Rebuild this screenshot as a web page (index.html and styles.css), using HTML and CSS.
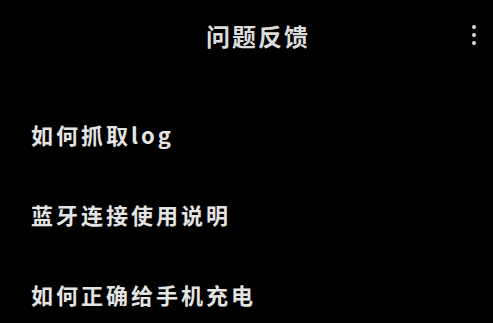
FILE: index.html
```html
<!DOCTYPE html>
<html lang="zh-CN">
<head>
  <meta charset="UTF-8">
  <title>问题反馈</title>
  <link rel="stylesheet" href="styles.css">
</head>
<body>

<div class="page">
  <div class="top-bar">
    <span class="title">问题反馈</span>
    <span class="more">
      <i></i><i></i><i></i>
    </span>
  </div>
  <div class="faq-list">
    <div class="faq-item">如何抓取log</div>
    <div class="faq-item">蓝牙连接使用说明</div>
    <div class="faq-item">如何正确给手机充电</div>
  </div>
</div>

</body>
</html>
```

FILE: styles.css
```css
* {
  box-sizing: border-box;
  font-family: "Noto Sans CJK SC", "Noto Sans", sans-serif;
}

html, body {
  margin: 0;
  padding: 0;
  width: 100vw;
  height: 100vh;
  background-color: #000;
  color: #e4e4e4;
  overflow: hidden;
}

.page {
  display: flex;
  flex-direction: column;
}

.top-bar {
  height: 70px;
  display: flex;
  align-items: center;
  padding: 0 15px 0 46px;
}

.top-bar .title {
  flex: 1;
  text-align: center;
  font-size: 24px;
  font-weight: bold;
  letter-spacing: 2px;
  color: #dcdcdc;
}

.top-bar .more {
  width: 8px;
  display: flex;
  flex-direction: column;
  align-items: center;
  gap: 4px;
}

.top-bar .more i {
  display: block;
  width: 4px;
  height: 4px;
  border-radius: 50%;
  background-color: #dcdcdc;
}

.faq-list {
  display: flex;
  flex-direction: column;
  padding-top: 24px;
}

.faq-item {
  height: 80px;
  display: flex;
  align-items: center;
  padding-left: 31px;
  font-size: 22px;
  font-weight: bold;
  letter-spacing: 3px;
}
```
